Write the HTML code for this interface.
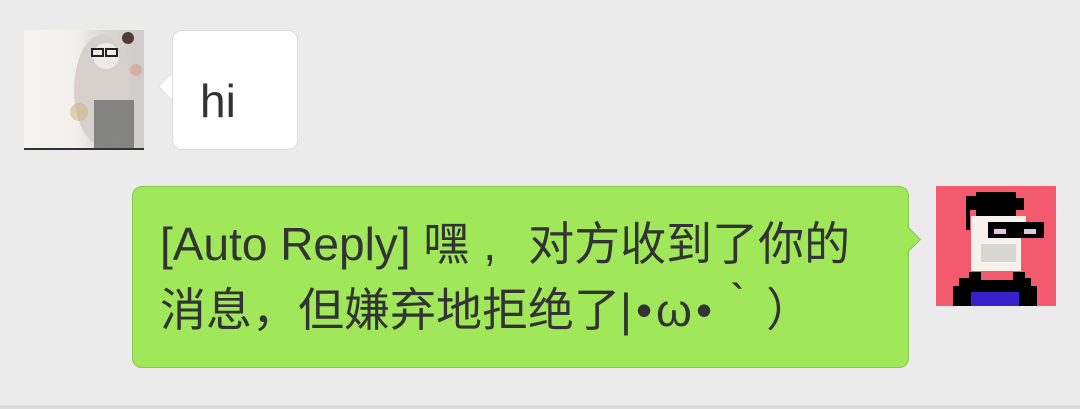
<!DOCTYPE html>
<html><head><meta charset="utf-8"><style>
html,body{margin:0;padding:0;}
body{width:1080px;height:409px;background:#ebebeb;position:relative;overflow:hidden;font-family:"Liberation Sans","Noto Sans CJK SC",sans-serif;color:#333;}
.av1{position:absolute;left:24px;top:30px;width:120px;height:120px;background:linear-gradient(90deg,#f6f5f2 0%,#f2efea 45%,#dcd8d3 65%,#cfcbc7 100%);border-bottom:2px solid #333;box-sizing:border-box;overflow:hidden;}
.b1{position:absolute;left:172px;top:30px;width:126px;height:120px;background:#fff;border:1px solid #dcdcdc;border-radius:10px;box-sizing:border-box;font-size:46px;line-height:46px;}
.b1 span{position:absolute;left:27px;top:47px;}
.t1{position:absolute;left:161px;top:78px;width:16px;height:16px;background:#fff;border-left:1px solid #dcdcdc;border-bottom:1px solid #dcdcdc;transform:rotate(45deg);}
.b2{position:absolute;left:132px;top:186px;width:777px;height:182px;background:#a0e75a;border:1px solid #86c84a;border-radius:10px;box-sizing:border-box;font-size:46px;line-height:66px;}
.b2 div{position:absolute;left:27px;top:24px;white-space:nowrap;}
.tail{letter-spacing:4px;}
.t2{position:absolute;left:898px;top:230px;width:18px;height:18px;background:#a0e75a;border-right:1px solid #86c84a;border-top:1px solid #86c84a;transform:rotate(45deg);}
.av2{position:absolute;left:936px;top:186px;}
.bl{position:absolute;left:0;top:405px;width:1080px;height:4px;background:#dcdcdc;}
</style></head><body>
<div class="av1">
<svg width="120" height="120"><ellipse cx="78" cy="60" rx="28" ry="55" fill="#d6d1cc"/><rect x="70" y="70" width="40" height="50" fill="#6e716f" opacity=".8"/><circle cx="82" cy="26" r="13" fill="#efece8"/><rect x="68" y="19" width="11" height="7" fill="none" stroke="#222" stroke-width="2"/><rect x="82" y="19" width="11" height="7" fill="none" stroke="#222" stroke-width="2"/><circle cx="112" cy="40" r="6" fill="#d3a79f" opacity=".8"/><circle cx="104" cy="8" r="6" fill="#553a3a"/><circle cx="55" cy="82" r="9" fill="#c9b27a" opacity=".5"/></svg>
</div>
<div class="t1"></div>
<div class="b1"><span>hi</span></div>
<div class="b2"><div>[Auto Reply] 嘿<span style="margin-left:14px;margin-right:32px">,</span>对方收到了你的<br>消息，但嫌弃地拒绝了<span class="tail">|•ω•｀）</span></div></div>
<div class="t2"></div>
<svg class="av2" width="120" height="120">
<rect width="120" height="120" fill="#f45a6e"/>
<rect x="35" y="30" width="50" height="55" fill="#f6f1ea"/>
<rect x="45" y="58" width="35" height="18" fill="#d8d6d2"/>
<path d="M30 10h10v-4h40v6h8v12h-8v6h-40v-6h-6v20h-4z" fill="#000"/>
<rect x="52" y="30" width="38" height="6" fill="#f6f1ea"/>
<rect x="52" y="36" width="56" height="16" fill="#000"/>
<rect x="58" y="43" width="12" height="5" fill="#e0c8e0"/>
<rect x="88" y="43" width="12" height="5" fill="#e0c8e0"/>
<path d="M17 120v-20h6v-8h10v-6h12v8h32v-8h12v6h6v8h6v20z" fill="#000"/>
<rect x="35" y="106" width="48" height="14" fill="#3a1fcc"/>
</svg>
<div class="bl"></div>
</body></html>
